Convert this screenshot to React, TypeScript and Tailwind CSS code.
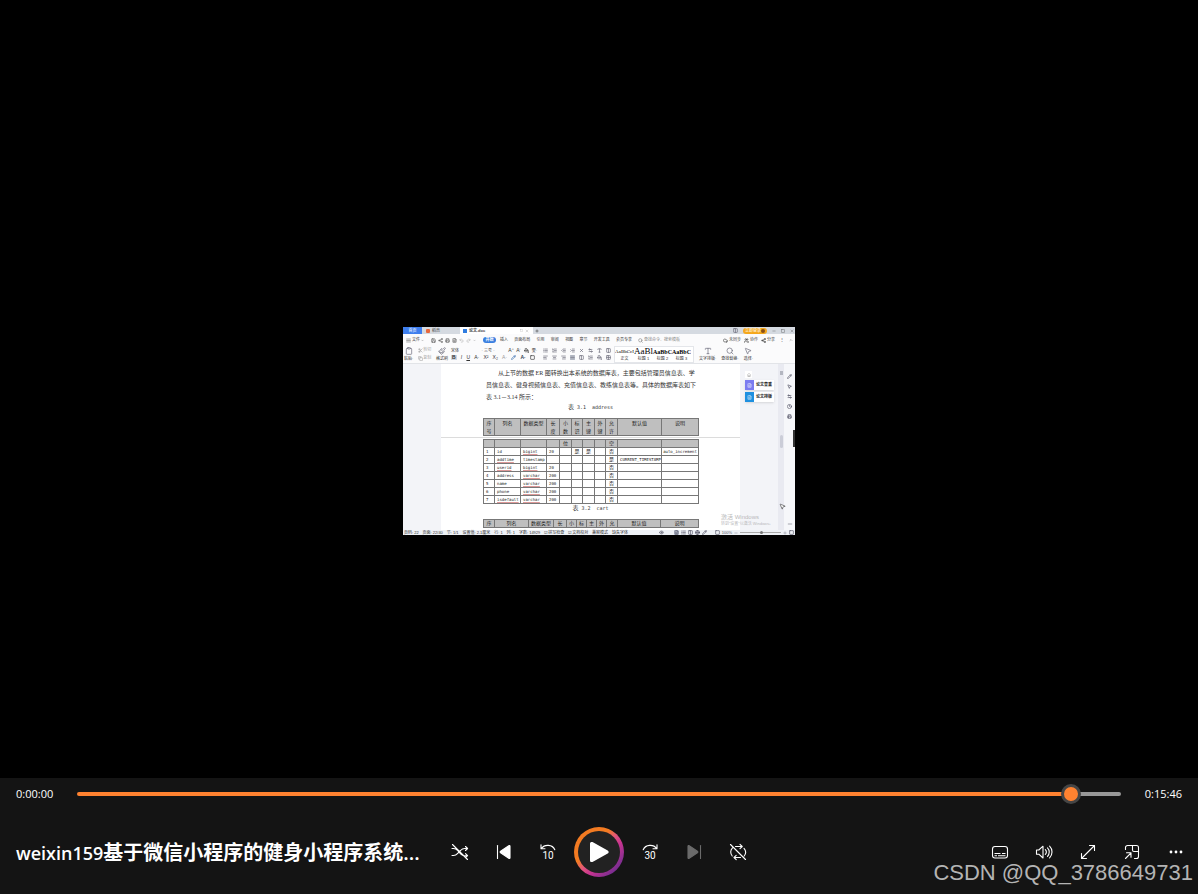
import React from "react";
import {
  AlignCenter, AlignJustify, AlignLeft, AlignRight, Clipboard, Clock, Cloud, Columns2, Copy, Eye, FileText, Globe,
  Grid2x2, Indent, List, ListOrdered, MousePointer2, Outdent, PaintBucket, Paintbrush, Pencil, Printer, Redo2, Save,
  Scissors, Search, Settings2, Share2, Type, Undo2, Users, Home, Minus, Plus, Square, X, ChevronDown, ChevronUp,
} from "lucide-react";

type IconType = React.ComponentType<{ className?: string; strokeWidth?: number }>;

const cjk = "font-['Liberation_Sans','Noto_Sans_CJK_SC',sans-serif]";

function Tiny({ icon: Icon, className = "" }: { icon: IconType; className?: string }) {
  return <Icon className={"size-[5px] shrink-0 " + className} strokeWidth={3} />;
}

/* ---------- Document window shown in the video frame ---------- */

function TabBar() {
  return (
    <div className="flex h-[7px] items-center bg-[#d5dae1] text-[4px] leading-none text-[#444]">
      <div className="flex h-full w-[19px] items-center justify-center bg-[#3f7fee] text-white">首页</div>
      <div className="flex h-full w-[38px] items-center gap-[2px] pl-[4px]">
        <span className="size-[4px] rounded-[1px] bg-[#e8683c]" />
        <span>稻壳</span>
      </div>
      <div className="flex h-full w-[73px] items-center gap-[2px] bg-white pl-[3px]">
        <span className="size-[4px] bg-[#2f7ce0]" />
        <span className="font-bold">论文.doc</span>
        <Square className="ml-auto size-[3px] text-[#999]" />
        <X className="mr-[4px] size-[4px] text-[#999]" />
      </div>
      <Plus className="ml-[2px] size-[4px] text-[#333]" strokeWidth={3} />
      <div className="ml-auto flex items-center gap-[5px] pr-[1px]">
        <Tiny icon={Columns2} className="text-[#667]" />
        <span className="flex h-[6px] w-[24px] items-center justify-between rounded-full bg-[#f5a81c] px-[2px] text-white">
          立即登录
          <span className="size-[4px] rounded-full bg-[#8a5018]" />
        </span>
        <Minus className="size-[4px]" />
        <Square className="size-[4px]" />
        <X className="size-[4px]" />
      </div>
    </div>
  );
}

function MenuRow() {
  return (
    <div className="flex h-[11px] items-center bg-[#fbfbfc] pl-[3px] pt-px text-[4px] leading-none text-[#333]">
      <div className="flex w-[25px] items-center gap-[1px]">
        <Tiny icon={AlignJustify} className="text-[#777]" />
        <span>文件</span>
        <ChevronDown className="size-[3px]" />
      </div>
      <div className="flex w-[52px] items-center gap-[2px] text-[#666]">
        <Tiny icon={Save} />
        <Tiny icon={Share2} />
        <Tiny icon={Printer} />
        <Tiny icon={FileText} />
        <Tiny icon={Undo2} className="text-[#bbb]" />
        <Tiny icon={Redo2} className="text-[#bbb]" />
        <ChevronDown className="size-[3px]" />
      </div>
      <span className="flex h-[6px] w-[13px] items-center justify-center rounded-full bg-[#3a7fe0] font-bold text-white">开始</span>
      <div className="ml-[4px] flex w-[132px] items-center justify-between">
        {["插入", "页面布局", "引用", "审阅", "视图", "章节", "开发工具", "会员专享"].map((t) => (
          <span key={t}>{t}</span>
        ))}
      </div>
      <div className="ml-[6px] flex items-center gap-[1px] text-[#888]">
        <Tiny icon={Search} />
        <span>查找命令、搜索模板</span>
      </div>
      <div className="ml-auto flex items-center gap-[1px] pr-[2px] text-[#444]">
        <Tiny icon={Cloud} />
        <span className="mr-[2px]">未同步</span>
        <Tiny icon={Users} />
        <span className="mr-[2px]">协作</span>
        <Tiny icon={Share2} />
        <span className="mr-[4px]">分享</span>
        <span className="mr-[4px]">⋮</span>
        <ChevronUp className="size-[4px]" />
      </div>
    </div>
  );
}

const styleBoxes = [
  { sample: "AaBbCcI", label: "正文", cls: "text-[5px]" },
  { sample: "AaBl", label: "标题 1", cls: "text-[9px]" },
  { sample: "AaBbC", label: "标题 2", cls: "text-[6px] font-bold" },
  { sample: "AaBbC", label: "标题 3", cls: "text-[6px] font-bold" },
];

function BigTool({ icon: Icon, label }: { icon: IconType; label: string }) {
  return (
    <div className="flex flex-col items-center gap-[2px]">
      <Icon className="size-[8px] text-[#667]" strokeWidth={2} />
      <span className="whitespace-nowrap">{label}</span>
    </div>
  );
}

function Ribbon() {
  return (
    <div className="flex h-[19px] items-center border-b border-[#e2e4e8] bg-[#fbfbfc] pl-[1px] text-[4px] leading-none text-[#333]">
      <div className="flex w-[44px] items-center justify-between">
        <BigTool icon={Clipboard} label="粘贴·" />
        <div className="flex flex-col gap-[3px] text-[#aaa]">
          <span className="flex items-center"><Tiny icon={Scissors} />剪切</span>
          <span className="flex items-center"><Tiny icon={Copy} />复制</span>
        </div>
        <BigTool icon={Paintbrush} label="格式刷" />
      </div>
      <div className="ml-[3px] flex w-[86px] flex-col gap-[2px]">
        <div className="flex items-center justify-between">
          <span className="w-[28px]">宋体</span>
          <span className="w-[24px]">· 三号 ·</span>
          <span className="text-[5px]">A⁺</span>
          <span className="text-[5px]">A⁻</span>
          <Tiny icon={PaintBucket} />
          <span>雯·</span>
        </div>
        <div className="flex items-center justify-between pr-[2px] text-[5px]">
          <b className="bg-[#cfd5df] px-[1px]">B</b>
          <i>I</i>
          <span className="underline">U</span>
          <span>A·</span>
          <span>X²</span>
          <span>X₂</span>
          <span className="text-[#999]">A·</span>
          <Tiny icon={Pencil} className="text-[#3a6fb0]" />
          <span className="font-bold text-[#345]">A·</span>
          <Tiny icon={Square} />
        </div>
      </div>
      <div className="ml-[6px] flex w-[68px] flex-col gap-[2px] text-[#667]">
        <div className="flex items-center justify-between">
          <Tiny icon={List} />
          <Tiny icon={ListOrdered} />
          <Tiny icon={Outdent} />
          <Tiny icon={Indent} />
          <Tiny icon={X} />
          <Tiny icon={Settings2} />
          <Tiny icon={Type} />
          <Tiny icon={Columns2} />
        </div>
        <div className="flex items-center justify-between">
          <Tiny icon={AlignLeft} />
          <Tiny icon={AlignCenter} />
          <Tiny icon={AlignRight} />
          <Tiny icon={AlignJustify} className="bg-[#cfd5df]" />
          <Tiny icon={Columns2} />
          <Tiny icon={ListOrdered} />
          <Tiny icon={PaintBucket} />
          <Tiny icon={Grid2x2} />
        </div>
      </div>
      <div className="ml-[3px] flex h-[17px] w-[80px] border border-[#e4e6ea] bg-white">
        {styleBoxes.map((s) => (
          <div key={s.label} className="flex w-[19px] flex-col items-center overflow-hidden">
            <span className={"flex h-[10px] items-center font-['Liberation_Serif',serif] text-black " + s.cls}>{s.sample}</span>
            <span>{s.label}</span>
          </div>
        ))}
      </div>
      <div className="ml-[5px] flex w-[54px] items-center justify-between">
        <BigTool icon={Type} label="文字排版·" />
        <BigTool icon={Search} label="查找替换·" />
        <BigTool icon={MousePointer2} label="选择·" />
      </div>
    </div>
  );
}

function Cells({ values, head = false, tall = false }: { values: string[]; head?: boolean; tall?: boolean }) {
  return (
    <tr className={(head ? "bg-[#bfbfbf] " : "") + (tall ? "h-[16px] align-top" : "h-[8px]")}>
      {values.map((v, i) => {
        const centered = head || (i > 3 && i !== 9);
        const small = !head && (i < 4 || i > 8);
        const cls =
          "overflow-hidden whitespace-pre border border-[#777] p-0 font-normal " +
          (centered ? "text-center " : "pl-[2px] text-left ") +
          (small ? "text-[4px] " : "text-[5px] ") +
          (tall ? "leading-[8px]" : "leading-[7px]");
        return head ? (
          <th key={i} className={cls}>{v}</th>
        ) : (
          <td key={i} className={cls}>
            {/^(addtime|userid|isdefault|bigint|varchar)$/.test(v) ? (
              <span className="underline decoration-[#d99] decoration-1">{v}</span>
            ) : v}
          </td>
        );
      })}
    </tr>
  );
}

const rows = [
  ["1", "id", "bigint", "20", "", "是", "是", "", "否", "", "auto_increment"],
  ["2", "addtime", "timestamp", "", "", "", "", "", "是", "CURRENT_TIMESTAMP", ""],
  ["3", "userid", "bigint", "20", "", "", "", "", "否", "", ""],
  ["4", "address", "varchar", "200", "", "", "", "", "否", "", ""],
  ["5", "name", "varchar", "200", "", "", "", "", "否", "", ""],
  ["6", "phone", "varchar", "200", "", "", "", "", "否", "", ""],
  ["7", "isdefault", "varchar", "200", "", "", "", "", "否", "", ""],
];

const tableCls =
  "ml-[42px] w-[215px] table-fixed border-collapse font-['DejaVu_Sans_Mono','Noto_Sans_CJK_SC',monospace] text-[#222]";

function Cols() {
  return (
    <colgroup>
      <col className="w-[11px]" /><col className="w-[26px]" /><col className="w-[26px]" /><col className="w-[13px]" />
      <col className="w-[12px]" /><col className="w-[11px]" /><col className="w-[12px]" /><col className="w-[11px]" />
      <col className="w-[12px]" /><col className="w-[44px]" /><col className="w-[37px]" />
    </colgroup>
  );
}

function ColsNext() {
  return (
    <colgroup>
      <col className="w-[11px]" /><col className="w-[34px]" /><col className="w-[25px]" /><col className="w-[13px]" />
      <col className="w-[10px]" /><col className="w-[10px]" /><col className="w-[10px]" /><col className="w-[10px]" />
      <col className="w-[11px]" /><col className="w-[43px]" /><col className="w-[38px]" />
    </colgroup>
  );
}

function Caption({ no, name }: { no: string; name: string }) {
  return (
    <p className="h-[8px] whitespace-pre text-center font-['DejaVu_Sans_Mono','Noto_Sans_CJK_SC',monospace] text-[5px] leading-[8px] text-[#333]">
      <span className="text-[6px]">表</span>
      {" " + no + "  " + name}
    </p>
  );
}

function Page() {
  return (
    <div className="w-[299px] shrink-0 overflow-hidden bg-white pt-[3px]">
      <div className="whitespace-nowrap pl-[45px] font-['Liberation_Serif','Noto_Sans_CJK_SC',serif] text-[6px] leading-[12px] text-[#333]">
        <p className="pl-[12px]">从上节的数据 ER 图转换出本系统的数据库表，主要包括管理员信息表、学</p>
        <p>员信息表、健身视频信息表、充值信息表、教练信息表等。具体的数据库表如下</p>
        <p>表 3.1－3.14 所示：</p>
      </div>
      <Caption no="3.1" name="address" />
      <table className={tableCls + " mt-[7px]"}>
        <Cols />
        <thead>
          <Cells head tall values={["序\n号", "列名", "数据类型", "长\n度", "小\n数", "标\n识", "主\n键", "外\n键", "允\n许", "默认值", "说明"]} />
        </thead>
      </table>
      <div className="mt-[1px] h-px bg-[#dcdcdc]" />
      <table className={tableCls + " mt-[1px]"}>
        <Cols />
        <thead>
          <Cells head values={["", "", "", "", "位", "", "", "", "空", "", ""]} />
        </thead>
        <tbody>{rows.map((r) => <Cells key={r[0]} values={r} />)}</tbody>
      </table>
      <Caption no="3.2" name="cart" />
      <table className={tableCls + " mt-[7px]"}>
        <ColsNext />
        <thead>
          <Cells head values={["序", "列名", "数据类型", "长", "小", "标", "主", "外", "允", "默认值", "说明"]} />
        </thead>
      </table>
    </div>
  );
}

function SidePanel() {
  return (
    <div className="flex flex-1 bg-[#f3f4f8] text-[4px] font-bold leading-none text-[#222]">
      <div className="flex w-[38px] flex-col gap-[2px] pl-[5px] pt-[7px]">
        <span className="flex size-[7px] items-center justify-center bg-white"><Home className="size-[4px] text-[#888]" /></span>
        <span className="flex h-[10px] w-[29px] items-center gap-[2px] bg-white shadow-sm">
          <span className="flex h-full w-[9px] items-center justify-center bg-[#7b7cf0]"><FileText className="size-[5px] text-white" /></span>
          论文查重
        </span>
        <span className="flex h-[10px] w-[29px] items-center gap-[2px] bg-white shadow-sm">
          <span className="flex h-full w-[9px] items-center justify-center bg-[#1e90e0]"><FileText className="size-[5px] text-white" /></span>
          论文排版
        </span>
      </div>
      <div className="flex w-[6px] flex-col items-center bg-[#e9eaf1] pt-[7px]">
        <span className="h-[4px] w-[3px] bg-[#b3b6c0]" />
        <span className="mt-[60px] h-[13px] w-[3px] rounded-full bg-[#cbcdd8]" />
      </div>
      <div className="flex flex-1 flex-col items-center gap-[5px] bg-[#f6f7fa] pt-[10px] text-[#556]">
        <Tiny icon={Pencil} />
        <Tiny icon={MousePointer2} />
        <Tiny icon={Settings2} />
        <Tiny icon={Clock} />
        <Tiny icon={Printer} />
        <span className="mt-[6px] h-[17px] w-[2px] self-end bg-[#333]" />
        <Minus className="mb-[3px] mt-auto size-[6px]" />
      </div>
    </div>
  );
}

function StatusBar() {
  return (
    <div className="flex h-[5px] items-center bg-[#eef1f6] px-[1px] text-[4px] leading-none text-[#333]">
      <div className="flex w-[224px] items-center justify-between whitespace-nowrap">
        <span>页码: 22</span><span>页面: 22/40</span><span>节: 1/1</span><span>设置值: 2.1厘米</span><span>行: 1</span>
        <span>列: 1</span><span>字数: 14929</span><span>☑拼写检查</span><span>☑文档校对</span><span>兼容模式</span><span>缺失字体</span>
      </div>
      <div className="ml-auto flex items-center gap-[2px] text-[#556]">
        <Tiny icon={Eye} className="mr-[8px]" />
        <Tiny icon={FileText} className="bg-[#cdd6e4]" />
        <Tiny icon={List} />
        <Tiny icon={Columns2} />
        <Tiny icon={Globe} />
        <Tiny icon={Pencil} />
        <Tiny icon={Square} className="ml-[6px]" />
        <span>100%</span>
        <Minus className="size-[4px]" />
        <span className="flex h-px w-[41px] items-center bg-[#aaa]"><span className="ml-[20px] size-[3px] rounded-full bg-[#777]" /></span>
        <Plus className="size-[4px]" />
        <Tiny icon={Square} />
      </div>
    </div>
  );
}

function VideoFrame() {
  return (
    <div lang="zh-CN" className={"relative flex h-[208px] w-[392px] flex-col overflow-hidden bg-white " + cjk}>
      <TabBar />
      <MenuRow />
      <Ribbon />
      <div className="flex h-[166px] overflow-hidden">
        <div className="w-[38px] shrink-0 bg-[#f3f4f8]" />
        <Page />
        <SidePanel />
      </div>
      <StatusBar />
      <div className="absolute bottom-[8px] left-[318px] whitespace-nowrap text-[#b9b9bb]">
        <p className="text-[6px] leading-[8px]">激活 Windows</p>
        <p className="text-[4px] leading-[6px]">转到“设置”以激活 Windows。</p>
      </div>
      <MousePointer2 className="absolute bottom-[25px] right-[9px] size-[7px] fill-white text-[#333]" />
    </div>
  );
}

/* ---------- Player controls ---------- */

function Control({ label, disabled, children }: { label: string; disabled?: boolean; children: React.ReactNode }) {
  return (
    <button
      type="button"
      aria-label={label}
      disabled={disabled}
      className="flex h-11 w-11 items-center justify-center text-white disabled:text-[#6b6b6b]"
    >
      <svg viewBox="0 0 18 18" className="size-[18px]" fill="none" stroke="currentColor" strokeWidth="1.1" strokeLinecap="round" strokeLinejoin="round">
        {children}
      </svg>
    </button>
  );
}

function JumpText({ children }: { children: string }) {
  return (
    <text x="9" y="16" textAnchor="middle" className="fill-current stroke-none font-['Roboto',sans-serif] text-[10px]">
      {children}
    </text>
  );
}

export default function App() {
  return (
    <div className="flex min-h-screen flex-col bg-black font-['Open_Sans','Noto_Sans_CJK_SC',sans-serif] text-white">
      <main className="flex flex-1 items-center justify-center pt-[84px]">
        <VideoFrame />
      </main>
      <footer className="relative bg-[#141414]">
        <div className="flex h-8 items-center px-4 text-[11px]">
          <span className="w-[61px]">0:00:00</span>
          <input
            type="range"
            aria-label="播放进度"
            min={0}
            max={1000}
            defaultValue={961}
            className="h-5 min-w-0 flex-1 cursor-pointer appearance-none bg-transparent [&::-webkit-slider-runnable-track]:h-1 [&::-webkit-slider-runnable-track]:rounded-full [&::-webkit-slider-runnable-track]:bg-[linear-gradient(to_right,#ff8230_95%,#989898_95%)] [&::-webkit-slider-thumb]:-mt-2 [&::-webkit-slider-thumb]:size-5 [&::-webkit-slider-thumb]:appearance-none [&::-webkit-slider-thumb]:rounded-full [&::-webkit-slider-thumb]:border-[3px] [&::-webkit-slider-thumb]:border-solid [&::-webkit-slider-thumb]:border-[#454545] [&::-webkit-slider-thumb]:bg-[#ff8230] [&::-webkit-slider-thumb]:bg-clip-border"
          />
          <span className="w-[61px] text-right">0:15:46</span>
        </div>
        <div className="grid h-[84px] grid-cols-[1fr_auto_1fr] items-center">
          <h1 className="flex min-w-0 items-baseline overflow-hidden whitespace-nowrap pl-4 text-xl leading-7">
            <span className="text-[18px] font-semibold">weixin159</span>
            <span className="font-['Noto_Sans_CJK_SC',sans-serif] font-bold">基于微信小程序的健身小程序系统</span>
            <span className="font-semibold">...</span>
          </h1>
          <div className="flex items-center">
            <Control label="随机播放">
              <path d="M1 5.500h1.500c1.800 0 2.900.7 4.100 2l3 3.300c1.200 1.300 2.200 1.900 4 1.900h2.800M1 12.500h1.500c1.800 0 3-.8 4.200-2.100l2.800-2.900c1.200-1.300 2.300-2 4.100-2h2.800M14.500 3.500l2.100 2-2.100 2M14.500 10.700l2.100 2-2.100 2M1.500 1.500l15 15" />
            </Control>
            <Control label="上一个">
              <path d="M2.500 2.500v13" />
              <path d="M15 3.300v11.400c0 .7-.6 1-1.200.6L5.600 9.800c-.6-.4-.6-1.200 0-1.600l8.200-5.500c.6-.4 1.200-.1 1.200.6z" fill="currentColor" />
            </Control>
            <Control label="后退 10 秒">
              <path d="M2 1.800v4h4M2.300 5.500C5.500 1 13.500 1.200 15.800 6.800" />
              <JumpText>10</JumpText>
            </Control>
            <button
              type="button"
              aria-label="播放"
              className="mx-1 flex size-[50px] items-center justify-center rounded-full bg-[linear-gradient(135deg,#f37b22_0%,#f37b22_38%,#e2577a_50%,#c83490_62%,#762d91_86%)] p-1"
            >
              <span className="flex size-full items-center justify-center rounded-full bg-[#222]">
                <svg viewBox="0 0 24 24" className="size-6" fill="white">
                  <path d="M3 3.500c0-1.300 1.300-2 2.500-1.400l15.200 8.300c1.300.7 1.300 2.500 0 3.200L5.500 21.900C4.300 22.500 3 21.800 3 20.500z" />
                </svg>
              </span>
            </button>
            <Control label="前进 30 秒">
              <path d="M16 1.800v4h-4M15.700 5.500C12.500 1 4.500 1.200 2.200 6.800" />
              <JumpText>30</JumpText>
            </Control>
            <Control label="下一个" disabled>
              <path d="M15.500 2.500v13" />
              <path d="M3 3.300v11.400c0 .7.6 1 1.200.6l8.200-5.500c.6-.4.6-1.200 0-1.600L4.200 2.700C3.600 2.300 3 2.600 3 3.300z" fill="currentColor" />
            </Control>
            <Control label="重复播放">
              <path d="M6.500 3.500h6.300M11 1.300l2.200 2.200L11 5.700M15 5.300c2 2.300 2 5.400.2 7.700M11.500 14.500H5.500M7.200 12.300L5 14.500l2.200 2.200M3.200 13c-2-2.400-2-6 .3-8.200M1.500 1.500l15 15" />
            </Control>
          </div>
          <div className="flex items-center justify-end">
            <Control label="字幕">
              <rect x="1.500" y="3.500" width="15" height="11.500" rx="2.500" />
              <path d="M3.500 10.500h6M11 10.500h3.500M3.500 12.700h2.500M7 12.700h7.500" strokeLinecap="butt" />
            </Control>
            <Control label="音量">
              <path d="M1.500 7v4.200h2.300L8 15V3.200L3.800 7zM10.300 6.600c1.200 1.300 1.200 3.500 0 4.900M12.500 4.800c2.300 2.300 2.300 6.200 0 8.500M14.600 3.200c3.200 3.200 3.200 8.500 0 11.700" />
            </Control>
            <Control label="全屏">
              <path d="M2.500 15.500l13-13M10.500 2.500h5v5M2.500 10.500v5h5" />
            </Control>
            <Control label="迷你播放器">
              <path d="M2.500 6.500V4.500a2 2 0 0 1 2-2h9a2 2 0 0 1 2 2v9a2 2 0 0 1-2 2h-2M9.500 2.500v4.500a1.500 1.500 0 0 0 1.500 1.500h4.500M2.500 15.500l5.300-5.300M3.500 9.700h4.500v4.500" />
            </Control>
            <Control label="更多">
              <g fill="currentColor" stroke="none">
                <circle cx="4" cy="9" r="1.400" /><circle cx="9" cy="9" r="1.400" /><circle cx="14" cy="9" r="1.400" />
              </g>
            </Control>
          </div>
        </div>
        <span className="pointer-events-none absolute bottom-2 right-[5px] whitespace-nowrap font-['Liberation_Sans',sans-serif] text-[22px] leading-[26px] text-[#b4b4b4]">
          CSDN @QQ_3786649731
        </span>
      </footer>
    </div>
  );
}
